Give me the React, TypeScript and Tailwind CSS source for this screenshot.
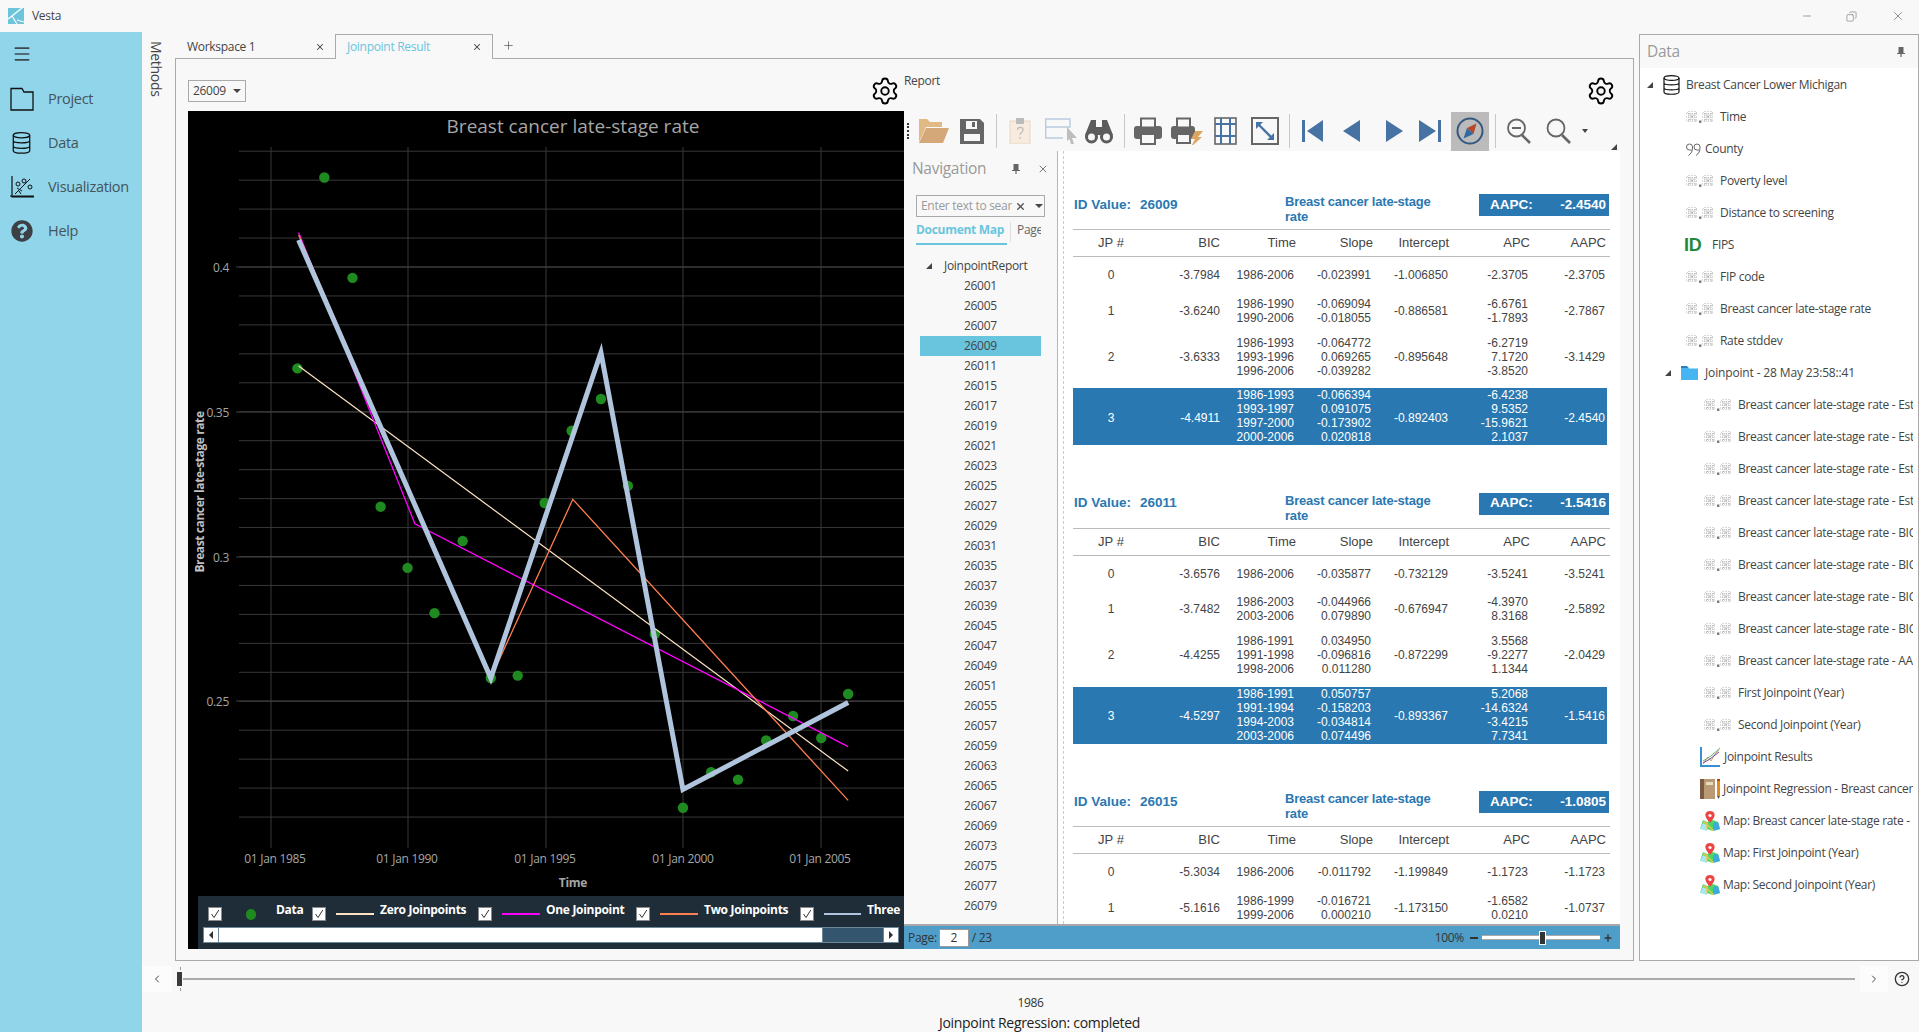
import {ChevronLeft, ChevronRight, CircleHelp, Copy, Menu, Minus, Plus, Settings, X} from "lucide-react";
import {FaQuestionCircle} from "react-icons/fa";

const S = 1.2239;

const dots = [
    [265, 145], [288, 227], [243, 301], [311, 414], [333, 464], [355, 501], [378, 442], [401, 554], [423, 552], [445, 411],
    [467, 352], [491, 326], [513, 397], [535, 518], [558, 660], [581, 631], [603, 637], [626, 605], [648, 585], [671, 603], [693, 567],
];
const lines = [
    {color: "#ffe4c4", w: 1.2, pts: [[244, 299], [693, 630]]},
    {color: "#ff00ff", w: 1.3, pts: [[244, 190], [339, 428], [693, 610]]},
    {color: "#ff7f50", w: 1.3, pts: [[244, 192], [401, 554], [468, 408], [693, 654]]},
    {color: "#b0c4de", w: 5, pts: [[244, 196], [401, 554], [491, 288], [558, 645], [693, 574]]},
];
const yTicks = [
    {y: 267, label: "0.4"},
    {y: 412, label: "0.35"},
    {y: 557, label: "0.3"},
    {y: 701, label: "0.25"},
];
const xTicks = [
    {x: 271, cx: 275, label: "01 Jan 1985"},
    {x: 408, cx: 407, label: "01 Jan 1990"},
    {x: 546, cx: 545, label: "01 Jan 1995"},
    {x: 683, cx: 683, label: "01 Jan 2000"},
    {x: 821, cx: 820, label: "01 Jan 2005"},
];

function Chart() {
    return (
        <svg viewBox="188 111 716 785" className="block w-[716px] h-[785px] bg-black">
            <text x="573" y="133" textAnchor="middle" fill="#a6a6a6" fontSize="19" fontFamily="'Open Sans', sans-serif" letterSpacing="0">
                Breast cancer late-stage rate
            </text>
            {Array.from({length: 24}).map((_, i) => (
                <line key={i} x1="239" x2="904" y1={151.2 + i * 28.95} y2={151.2 + i * 28.95} stroke="#383838"/>
            ))}
            {xTicks.map(t => (
                <line key={t.x} x1={t.x} x2={t.x} y1="147" y2="848" stroke="#383838"/>
            ))}
            {yTicks.map(t => (
                <g key={t.y}>
                    <line x1="236" x2="904" y1={t.y} y2={t.y} stroke="#404040"/>
                    <text x="229" y={t.y + 5} textAnchor="end" fill="#a6a6a6" fontSize="12" fontFamily="'Open Sans', sans-serif" letterSpacing="-0.3">{t.label}</text>
                </g>
            ))}
            {xTicks.map(t => (
                <text key={t.cx} x={t.cx} y="863" textAnchor="middle" fill="#a6a6a6" fontSize="12" fontFamily="'Open Sans', sans-serif" letterSpacing="-0.3">{t.label}</text>
            ))}
            <text x="573" y="887" textAnchor="middle" fill="#a6a6a6" fontSize="12" fontWeight="700" fontFamily="'Open Sans', sans-serif" letterSpacing="-0.3">Time</text>
            <text transform="translate(204 492) rotate(-90)" textAnchor="middle" fill="#c0c0c0" fontSize="12" fontWeight="700" fontFamily="'Open Sans', sans-serif" letterSpacing="-0.4">
                Breast cancer late-stage rate
            </text>
            {dots.map(([x, y]) => (
                <circle key={x} cx={x * S} cy={y * S} r="5.2" fill="#1f8a1f"/>
            ))}
            {lines.map(l => (
                <polyline key={l.color} points={l.pts.map(([x, y]) => `${x * S},${y * S}`).join(" ")} fill="none" stroke={l.color} strokeWidth={l.w}/>
            ))}
        </svg>
    );
}

function Check() {
    return (
        <div className="flex items-center justify-center w-[14px] h-[14px] bg-white border border-[#8a8a8a] shrink-0">
            <svg viewBox="0 0 10 10" className="w-[10px] h-[10px]"><path d="M1.5 5 L4 8.5 L8.8 1" fill="none" stroke="#333" strokeWidth="1"/></svg>
        </div>
    );
}

const legend = [
    {label: "Data", color: "", w: "w-[104px]"},
    {label: "Zero Joinpoints", color: "bg-[#ffe4c4]", w: "w-[166px]"},
    {label: "One Joinpoint", color: "bg-[#ff00ff]", w: "w-[158px]"},
    {label: "Two Joinpoints", color: "bg-[#ff7f50]", w: "w-[164px]"},
    {label: "Three", color: "bg-[#b0c4de]", w: "w-[100px]"},
];

function Legend() {
    return (
        <div className="ml-[10px] h-[53px] bg-[#1f2d38] overflow-hidden">
            <div className="flex pl-[10px] pt-[11px] h-[31px]">
                {legend.map(l => (
                    <div key={l.label} className={`flex items-center h-[14px] shrink-0 ${l.w}`}>
                        <Check/>
                        {l.color ? (
                            <div className={`ml-[10px] w-[38px] h-[2px] ${l.color}`}/>
                        ) : (
                            <div className="ml-[10px] w-[38px] flex justify-center"><div className="w-[10px] h-[11px] rounded-full bg-[#1f8a1f]"/></div>
                        )}
                        <span className="ml-[6px] pb-[8px] text-white text-[12px] font-bold whitespace-nowrap tracking-[-0.3px]">{l.label}</span>
                    </div>
                ))}
            </div>
            <div className="flex ml-[5px] w-[696px] h-[16px] border border-[#6e8796] bg-[#33566e]">
                <div className="flex items-center justify-center w-[15px] bg-white border-r border-[#6e8796]">
                    <div className="w-0 h-0 border-y-[4px] border-y-transparent border-r-[4px] border-r-[#333]"/>
                </div>
                <div className="w-[604px] bg-white border-r border-[#6e8796]"/>
                <div className="flex-1"/>
                <div className="flex items-center justify-center w-[15px] bg-white border-l border-[#6e8796]">
                    <div className="w-0 h-0 border-y-[4px] border-y-transparent border-l-[4px] border-l-[#333]"/>
                </div>
            </div>
        </div>
    );
}

function Sep({className}: {className: string}) {
    return <div className={`w-px h-[34px] bg-[#c8c8c8] shrink-0 ${className}`}/>;
}

function Toolbar() {
    return (
        <div className="flex items-center h-[40px] relative bg-[#f8f8f8] shrink-0">
            <div className="ml-[3px] w-[3px] h-[16px] border-l-2 border-dotted border-[#333] shrink-0"/>
            <svg viewBox="0 0 32 26" className="ml-[8px] w-[32px] h-[26px] shrink-0">
                <path d="M1 24 V1 H9 L12 4 H24 V9 H8 Z" fill="#e0b984"/>
                <path d="M1 25 L8 10 H31 L25 25 Z" fill="#d4a878"/>
            </svg>
            <svg viewBox="0 0 24 25" className="ml-[10px] w-[24px] h-[25px] shrink-0">
                <path d="M0 0 H20 L24 4 V25 H0 Z" fill="#666"/>
                <rect x="6" y="2" width="11" height="8" fill="#f8f8f8"/>
                <rect x="12" y="3" width="3" height="5" fill="#666"/>
                <rect x="4" y="15" width="16" height="7" fill="#f8f8f8"/>
            </svg>
            <Sep className="ml-[12px]"/>
            <svg viewBox="0 0 22 26" className="ml-[12px] w-[22px] h-[26px] shrink-0">
                <rect x="1" y="3" width="20" height="23" fill="#f6ebde" stroke="#e8d6c2"/>
                <rect x="7" y="0" width="8" height="6" fill="#bbb"/>
                <path d="M8.5 12 C8.5 8.5 14 8.5 14 12 C14 14 11 14 11 17 M11 19 V21" fill="none" stroke="#bbb" strokeWidth="1.2"/>
            </svg>
            <svg viewBox="0 0 32 26" className="ml-[14px] w-[32px] h-[26px] shrink-0">
                <path d="M0.7 1 H25 V9 H0.7 Z M0.7 9 H16 M0.7 9 V20 H18" fill="none" stroke="#b9cade" strokeWidth="1.4"/>
                <path d="M22 9 L32 20 H27 L29 26 L26 26 L24.5 21 L22 23 Z" fill="#bdbdbd"/>
            </svg>
            <svg viewBox="0 0 28 25" className="ml-[8px] w-[28px] h-[25px] shrink-0">
                <path d="M6 1 H11 V8 H17 V1 H22 L28 16 H0 Z" fill="#5c5c5c"/>
                <circle cx="6.5" cy="18" r="5" fill="#f8f8f8" stroke="#5c5c5c" strokeWidth="3"/>
                <circle cx="21.5" cy="18" r="5" fill="#f8f8f8" stroke="#5c5c5c" strokeWidth="3"/>
            </svg>
            <Sep className="ml-[11px]"/>
            <svg viewBox="0 0 28 28" className="ml-[9px] w-[28px] h-[28px] shrink-0">
                <rect x="0" y="9" width="28" height="13" rx="3" fill="#666"/>
                <rect x="7" y="1.5" width="14" height="9" fill="#f8f8f8" stroke="#666" strokeWidth="2"/>
                <rect x="7" y="17" width="14" height="10" fill="#f8f8f8" stroke="#666" strokeWidth="2"/>
            </svg>
            <svg viewBox="0 0 32 28" className="ml-[9px] w-[32px] h-[28px] shrink-0">
                <rect x="0" y="9" width="24" height="13" rx="3" fill="#666"/>
                <rect x="6" y="1.5" width="13" height="9" fill="#f8f8f8" stroke="#666" strokeWidth="2"/>
                <rect x="6" y="17" width="13" height="9" fill="#f8f8f8" stroke="#666" strokeWidth="2"/>
                <path d="M24 14 H32 L27 20 H31 L20 30 L24 22 H20 Z" fill="#dba562"/>
            </svg>
            <svg viewBox="0 0 23 28" className="ml-[11px] w-[23px] h-[28px] shrink-0">
                <rect x="1" y="1" width="21" height="26" fill="none" stroke="#666" strokeWidth="1.6"/>
                <path d="M7 1 V27 M16 1 V27 M1 7 H22 M1 19 H22" stroke="#4672a4" strokeWidth="2"/>
            </svg>
            <svg viewBox="0 0 28 28" className="ml-[14px] w-[28px] h-[28px] shrink-0">
                <rect x="1" y="1" width="26" height="26" fill="none" stroke="#666" strokeWidth="2"/>
                <path d="M6 6 L22 22" stroke="#4672a4" strokeWidth="2.4"/>
                <path d="M5 5 H12 L5 12 Z M23 23 H16 L23 16 Z" fill="#4672a4"/>
            </svg>
            <Sep className="ml-[10px]"/>
            <svg viewBox="0 0 21 22" className="ml-[12px] w-[21px] h-[22px] shrink-0"><path d="M0 0 H3 V22 H0 Z M21 0 V22 L5 11 Z" fill="#4672a4"/></svg>
            <svg viewBox="0 0 17 22" className="ml-[20px] w-[17px] h-[22px] shrink-0"><path d="M17 0 V22 L0 11 Z" fill="#4672a4"/></svg>
            <svg viewBox="0 0 17 22" className="ml-[26px] w-[17px] h-[22px] shrink-0"><path d="M0 0 V22 L17 11 Z" fill="#4672a4"/></svg>
            <svg viewBox="0 0 22 22" className="ml-[16px] w-[22px] h-[22px] shrink-0"><path d="M19 0 H22 V22 H19 Z M0 0 V22 L17 11 Z" fill="#4672a4"/></svg>
            <div className="flex items-center justify-center ml-[10px] w-[38px] h-[39px] bg-[#bbbbbb] shrink-0">
                <svg viewBox="0 0 28 28" className="w-[28px] h-[28px]">
                    <circle cx="14" cy="14" r="12.5" fill="none" stroke="#35587f" strokeWidth="2"/>
                    <path d="M20.5 6.5 L17.5 17 L11 11 Z" fill="#b5492a"/>
                    <path d="M7.5 21.5 L11 11 L17.5 17 Z" fill="#2f6aa5"/>
                </svg>
            </div>
            <Sep className="ml-[6px]"/>
            <svg viewBox="0 0 24 26" className="ml-[11px] w-[24px] h-[26px] shrink-0">
                <circle cx="9.5" cy="10" r="8.5" fill="none" stroke="#666" strokeWidth="1.8"/>
                <path d="M15 17 L23 25" stroke="#666" strokeWidth="2.6"/>
                <path d="M5 10 H14" stroke="#666" strokeWidth="2"/>
            </svg>
            <svg viewBox="0 0 25 26" className="ml-[15px] w-[25px] h-[26px] shrink-0">
                <circle cx="10" cy="10" r="8.5" fill="none" stroke="#666" strokeWidth="1.8"/>
                <path d="M16 17 L24 25" stroke="#666" strokeWidth="2.6"/>
            </svg>
            <div className="ml-[11px] w-0 h-0 border-x-[3.5px] border-x-transparent border-t-[4px] border-t-[#444] shrink-0"/>
            <div className="absolute right-[3px] bottom-[1px] w-0 h-0 border-b-[6px] border-b-[#444] border-l-[6px] border-l-transparent"/>
        </div>
    );
}

const navIds = [
    "26001", "26005", "26007", "26009", "26011", "26015", "26017", "26019", "26021", "26023", "26025", "26027", "26029", "26031", "26035", "26037",
    "26039", "26045", "26047", "26049", "26051", "26055", "26057", "26059", "26063", "26065", "26067", "26069", "26073", "26075", "26077", "26079",
];

function Pin({className}: {className: string}) {
    return (
        <svg viewBox="0 0 8 10" className={`w-[8px] h-[10px] shrink-0 ${className}`}>
            <path d="M1.5 0 H6.5 V6 H8 V7 H4.6 V10 H3.4 V7 H0 V6 H1.5 Z" fill="#666"/>
        </svg>
    );
}

function Navigation() {
    return (
        <div className="flex flex-col w-[154px] shrink-0 border-r border-[#b5b5b5] overflow-hidden">
            <div className="flex items-center h-[36px] shrink-0 pl-[8px]">
                <span className="text-[15.5px] text-[#9a9a9a] w-[100px]">Navigation</span>
                <Pin className=""/>
                <X size={12} className="ml-[17px] text-[#777]"/>
            </div>
            <div className="flex items-center ml-[12px] mt-[8px] w-[129px] h-[22px] border border-[#aaa] shrink-0 pl-[4px] overflow-hidden">
                <span className="w-[91px] overflow-hidden whitespace-nowrap text-[12px] text-[#9a9a9a]">Enter text to search</span>
                <X size={11} strokeWidth={3} className="ml-[3px] text-[#555]"/>
                <div className="ml-[9px] w-0 h-0 border-x-[4px] border-x-transparent border-t-[4px] border-t-[#444]"/>
            </div>
            <div className="flex ml-[12px] h-[28px] shrink-0">
                <div className="flex items-center w-[91px] h-[28px] border-b-[2px] border-[#69c5de] text-[12px] font-bold text-[#69c5de] whitespace-nowrap">Document Map</div>
                <div className="ml-[3px] mt-[5px] w-px h-[20px] bg-[#ddd]"/>
                <div className="flex items-center ml-[6px] h-[26px] w-[24px] overflow-hidden text-[12px] text-[#666]">Page</div>
            </div>
            <div className="flex items-center h-[20px] mt-[11px] shrink-0 pl-[22px] text-[12px] text-[#444]">
                <div className="w-0 h-0 border-b-[6px] border-b-[#444] border-l-[6px] border-l-transparent"/>
                <span className="ml-[12px]">JoinpointReport</span>
            </div>
            {navIds.map(id => (
                <div key={id} className={`flex items-center ml-[16px] w-[121px] h-[20px] shrink-0 pl-[44px] text-[12px] text-[#444] ${id === "26009" ? "bg-[#69c5de]" : ""}`}>
                    {id}
                </div>
            ))}
        </div>
    );
}

type Row = {
    jp: string;
    bic: string;
    time: string[];
    slope: string[];
    intercept: string;
    apc: string[];
    aapc: string;
};

const reports: {id: string; aapc: string; selected: number; rows: Row[]}[] = [
    {
        id: "26009", aapc: "-2.4540", selected: 3, rows: [
            {jp: "0", bic: "-3.7984", time: ["1986-2006"], slope: ["-0.023991"], intercept: "-1.006850", apc: ["-2.3705"], aapc: "-2.3705"},
            {jp: "1", bic: "-3.6240", time: ["1986-1990", "1990-2006"], slope: ["-0.069094", "-0.018055"], intercept: "-0.886581", apc: ["-6.6761", "-1.7893"], aapc: "-2.7867"},
            {jp: "2", bic: "-3.6333", time: ["1986-1993", "1993-1996", "1996-2006"], slope: ["-0.064772", "0.069265", "-0.039282"], intercept: "-0.895648", apc: ["-6.2719", "7.1720", "-3.8520"], aapc: "-3.1429"},
            {jp: "3", bic: "-4.4911", time: ["1986-1993", "1993-1997", "1997-2000", "2000-2006"], slope: ["-0.066394", "0.091075", "-0.173902", "0.020818"], intercept: "-0.892403", apc: ["-6.4238", "9.5352", "-15.9621", "2.1037"], aapc: "-2.4540"},
        ],
    },
    {
        id: "26011", aapc: "-1.5416", selected: 3, rows: [
            {jp: "0", bic: "-3.6576", time: ["1986-2006"], slope: ["-0.035877"], intercept: "-0.732129", apc: ["-3.5241"], aapc: "-3.5241"},
            {jp: "1", bic: "-3.7482", time: ["1986-2003", "2003-2006"], slope: ["-0.044966", "0.079890"], intercept: "-0.676947", apc: ["-4.3970", "8.3168"], aapc: "-2.5892"},
            {jp: "2", bic: "-4.4255", time: ["1986-1991", "1991-1998", "1998-2006"], slope: ["0.034950", "-0.096816", "0.011280"], intercept: "-0.872299", apc: ["3.5568", "-9.2277", "1.1344"], aapc: "-2.0429"},
            {jp: "3", bic: "-4.5297", time: ["1986-1991", "1991-1994", "1994-2003", "2003-2006"], slope: ["0.050757", "-0.158203", "-0.034814", "0.074496"], intercept: "-0.893367", apc: ["5.2068", "-14.6324", "-3.4215", "7.7341"], aapc: "-1.5416"},
        ],
    },
    {
        id: "26015", aapc: "-1.0805", selected: -1, rows: [
            {jp: "0", bic: "-5.3034", time: ["1986-2006"], slope: ["-0.011792"], intercept: "-1.199849", apc: ["-1.1723"], aapc: "-1.1723"},
            {jp: "1", bic: "-5.1616", time: ["1986-1999", "1999-2006"], slope: ["-0.016721", "0.000210"], intercept: "-1.173150", apc: ["-1.6582", "0.0210"], aapc: "-1.0737"},
        ],
    },
];

const columns = "grid grid-cols-[76px_71px_76px_77px_76px_81px_76px] items-center";
const rowHeights = ["h-[36px]", "h-[35px]", "h-[57px]", "h-[57px]"];

function Lines({items}: {items: string[]}) {
    return (
        <div className={`flex flex-col text-right pr-[2px] leading-[14px] ${items.length === 4 ? "pb-[3px]" : ""}`}>
            {items.map((t, i) => <span key={i}>{t}</span>)}
        </div>
    );
}

function Report({report}: {report: (typeof reports)[number]}) {
    return (
        <div className="h-[298.5px] shrink-0 font-['Liberation_Sans',Arial,sans-serif] text-[12px] text-[#444] tracking-normal">
            <div className="flex h-[35px]">
                <div className="flex items-center w-[212px] h-[22px] pl-[1px] text-[13.5px] font-bold text-[#2a78b2]">
                    <span>ID Value:</span>
                    <span className="ml-[9px]">{report.id}</span>
                </div>
                <div className="w-[194px] text-[13px] font-bold leading-[15px] text-[#2a78b2] tracking-[-0.2px]">
                    <div className="w-[160px]">Breast cancer late-stage rate</div>
                </div>
                <div className="flex items-center justify-between w-[130px] h-[22px] pl-[11px] pr-[3px] bg-[#2a78b2] text-[13.5px] font-bold text-white">
                    <span>AAPC:</span>
                    <span>{report.aapc}</span>
                </div>
            </div>
            <div className={`${columns} w-[537px] h-[28px] border-y border-[#bbb] text-[13px]`}>
                <span className="text-center">JP #</span>
                <span className="text-right">BIC</span>
                <span className="text-right">Time</span>
                <span className="text-right">Slope</span>
                <span className="text-right">Intercept</span>
                <span className="text-right">APC</span>
                <span className="text-right">AAPC</span>
            </div>
            {report.rows.map((r, i) => (
                <div
                    key={r.jp}
                    className={`${columns} w-[534px] ${rowHeights[i]} ${i === report.selected ? "mt-[3px] bg-[#2a78b2] text-white" : ""}`}
                >
                    <span className="text-center">{r.jp}</span>
                    <span className="text-right">{r.bic}</span>
                    <Lines items={r.time}/>
                    <Lines items={r.slope}/>
                    <span className="text-right pr-[1px]">{r.intercept}</span>
                    <Lines items={r.apc}/>
                    <span className="text-right pr-[1px]">{r.aapc}</span>
                </div>
            ))}
        </div>
    );
}

function StatusBar() {
    return (
        <div className="flex items-center h-[25px] bg-[#4e9ec9] border-t-2 border-[#a8a8a8] shrink-0 text-[12px] text-[#333]">
            <span className="ml-[4px]">Page:</span>
            <div className="flex items-center justify-center ml-[2px] w-[30px] h-[18px] bg-white border border-[#999]">2</div>
            <span className="ml-[3px]">/ 23</span>
            <span className="ml-auto">100%</span>
            <span className="ml-[6px] w-[8px] h-[2px] bg-[#333]"/>
            <div className="relative ml-[4px] w-[118px] h-[5px] bg-white border-y border-[#aaa]">
                <div className="absolute left-[57px] -top-[5px] w-[7px] h-[14px] bg-[#333] border border-white"/>
            </div>
            <Plus size={10} strokeWidth={3.5} className="ml-[3px] mr-[7px]"/>
        </div>
    );
}

function NumIcon() {
    return (
        <svg viewBox="0 0 28 12" className="w-[28px] h-[12px] shrink-0">
            <g stroke="#b4b4b4" strokeWidth="1" strokeDasharray="1 1" fill="none">
                <path d="M3 0 V12 M6 0 V12 M9 0 V12 M0 3 H12 M0 6 H12 M0 9 H12 M1 1 L11 11 M11 1 L1 11"/>
                <path d="M19 0 V12 M22 0 V12 M25 0 V12 M16 3 H28 M16 6 H28 M16 9 H28 M17 1 L27 11 M27 1 L17 11"/>
            </g>
            <rect x="13" y="9.5" width="2.4" height="2.4" fill="#777"/>
        </svg>
    );
}

function QuoteIcon() {
    return (
        <svg viewBox="0 0 15 13" className="w-[15px] h-[13px] shrink-0" fill="none" stroke="#666" strokeWidth="1">
            <path d="M6.5 4 A3 3 0 1 0 3.5 7 H5.6 M6.5 4 C6.7 8 5 11 2.5 12.5"/>
            <path d="M14 4 A3 3 0 1 0 11 7 H13.1 M14 4 C14.2 8 12.5 11 10 12.5"/>
        </svg>
    );
}

function DbIcon() {
    return (
        <svg viewBox="0 0 17 20" className="w-[17px] h-[20px] shrink-0" fill="none" stroke="#111" strokeWidth="1.2">
            <ellipse cx="8.5" cy="3" rx="7.5" ry="2.4"/>
            <path d="M1 3 V17 C1 20 16 20 16 17 V3 M1 8 C1 10.5 16 10.5 16 8 M1 13 C1 15.5 16 15.5 16 13"/>
        </svg>
    );
}

function MapIcon() {
    return (
        <svg viewBox="0 0 20 20" className="w-[20px] h-[20px] shrink-0">
            <path d="M0 18 L3 9 L7 11 L13 9 L18 11 L20 18 L13 20 L7 18 Z" fill="#4cd964"/>
            <path d="M0 18 L3 12 L7 14 L7 20 Z" fill="#a8e6f5"/>
            <path d="M13 12 L18 11 L20 18 L13 20 Z" fill="#3fa9e0"/>
            <path d="M3 10 L14 20 M7 11 L7 19" stroke="#f5c542" strokeWidth="1.2"/>
            <path d="M10 0 C6 0 5 3 5.5 5 C6 7.5 10 12 10 12 C10 12 14 7.5 14.5 5 C15 3 14 0 10 0 Z" fill="#ef4444"/>
            <circle cx="10" cy="4.5" r="1.6" fill="#fff"/>
        </svg>
    );
}

function ChartIcon() {
    return (
        <svg viewBox="0 0 20 20" className="w-[20px] h-[20px] shrink-0" fill="none">
            <path d="M1 0 V19 H20" stroke="#3a8fd0" strokeWidth="2"/>
            <path d="M3 17 L8 10 L11 14 L15 7 L19 3" stroke="#d0b060" strokeWidth="1"/>
            <path d="M3 16 L10 12 L19 5" stroke="#7a3fb0" strokeWidth="1"/>
            <path d="M3 14 L11 9 L20 1" stroke="#2fa84f" strokeWidth="0.8"/>
        </svg>
    );
}

function BookIcon() {
    return (
        <svg viewBox="0 0 20 20" className="w-[20px] h-[20px] shrink-0">
            <rect x="0" y="0" width="4" height="20" fill="#7a5a40"/>
            <rect x="4" y="0" width="11" height="20" fill="#b99a75"/>
            <rect x="6" y="3" width="7" height="3" fill="#e8dcc0"/>
            <rect x="17" y="0" width="3" height="2" fill="#c0392b"/>
            <rect x="17" y="2" width="3" height="15" fill="#e08a1e"/>
            <path d="M17 17 H20 L18.5 20 Z" fill="#555"/>
        </svg>
    );
}

function FolderIcon() {
    return (
        <svg viewBox="0 0 17 14" className="w-[17px] h-[14px] shrink-0">
            <path d="M0 1 H7 L8 2.5 H17 V14 H0 Z" fill="#45b4f0"/>
            <path d="M0 0 H6 L7.5 2 H0 Z" fill="#2a7fc0"/>
        </svg>
    );
}

const Tri = () => <div className="w-0 h-0 border-b-[6px] border-b-[#444] border-l-[6px] border-l-transparent shrink-0"/>;

const numChildren = [
    "Breast cancer late-stage rate - Estimate", "Breast cancer late-stage rate - Estimate 2", "Breast cancer late-stage rate - Estimate 3", "Breast cancer late-stage rate - Estimate 4",
    "Breast cancer late-stage rate - BIC", "Breast cancer late-stage rate - BIC 1", "Breast cancer late-stage rate - BIC 2", "Breast cancer late-stage rate - BIC 3",
    "Breast cancer late-stage rate - AAPC", "First Joinpoint (Year)", "Second Joinpoint (Year)",
];

function DataRow({children}: {children: React.ReactNode}) {
    return <div className="flex items-center h-[32px] shrink-0 whitespace-nowrap overflow-hidden">{children}</div>;
}

function DataPanel() {
    return (
        <div className="flex flex-col w-[280px] shrink-0 mt-[2px] border border-[#aaa] overflow-hidden">
            <div className="flex items-center justify-between h-[33px] shrink-0 pl-[7px] pr-[13px]">
                <span className="text-[15.5px] text-[#9a9a9a]">Data</span>
                <Pin className=""/>
            </div>
            <div className="flex-1 bg-white pr-[5px] pt-[1px] text-[12px] text-[#444]">
                <DataRow>
                    <div className="ml-[7px] mr-[10px]"><Tri/></div>
                    <DbIcon/>
                    <span className="ml-[6px]">Breast Cancer Lower Michigan</span>
                </DataRow>
                {["Time", "County", "Poverty level", "Distance to screening", "FIPS", "FIP code", "Breast cancer late-stage rate", "Rate stddev"].map(label => (
                    <DataRow key={label}>
                        {label === "County" ? (
                            <>
                                <div className="ml-[46px] mr-[4px]"><QuoteIcon/></div>
                                <span>{label}</span>
                            </>
                        ) : label === "FIPS" ? (
                            <>
                                <span className="ml-[44px] w-[28px] text-[18px] font-black text-[#1f8a3a] font-['Liberation_Sans',sans-serif]">ID</span>
                                <span>{label}</span>
                            </>
                        ) : (
                            <>
                                <div className="ml-[46px]"><NumIcon/></div>
                                <span className="ml-[6px]">{label}</span>
                            </>
                        )}
                    </DataRow>
                ))}
                <DataRow>
                    <div className="ml-[25px] mr-[10px]"><Tri/></div>
                    <FolderIcon/>
                    <span className="ml-[7px] tracking-[-0.15px]">Joinpoint - 28 May 23:58::41</span>
                </DataRow>
                {numChildren.map(label => (
                    <DataRow key={label}>
                        <div className="ml-[64px]"><NumIcon/></div>
                        <span className="ml-[6px]">{label}</span>
                    </DataRow>
                ))}
                <DataRow>
                    <div className="ml-[60px]"><ChartIcon/></div>
                    <span className="ml-[4px]">Joinpoint Results</span>
                </DataRow>
                <DataRow>
                    <div className="ml-[60px]"><BookIcon/></div>
                    <span className="ml-[3px]">Joinpoint Regression - Breast cancer late-stage</span>
                </DataRow>
                {["Map: Breast cancer late-stage rate - Estimate", "Map: First Joinpoint (Year)", "Map: Second Joinpoint (Year)"].map(label => (
                    <DataRow key={label}>
                        <div className="ml-[60px]"><MapIcon/></div>
                        <span className="ml-[3px]">{label}</span>
                    </DataRow>
                ))}
            </div>
        </div>
    );
}

const sideItems = [
    {
        label: "Project",
        icon: (
            <svg viewBox="0 0 24 24" className="w-[24px] h-[24px]" fill="none" stroke="#111" strokeWidth="1.3">
                <path d="M1 1.5 H12 L14 5 H23 V23 H1 Z"/>
            </svg>
        ),
    },
    {label: "Data", icon: <div className="scale-110 ml-[3px]"><DbIcon/></div>},
    {
        label: "Visualization",
        icon: (
            <svg viewBox="0 0 24 24" className="w-[24px] h-[24px]" fill="none" stroke="#111" strokeWidth="1">
                <path d="M2 1 V22 H24 M0 21 H24" strokeWidth="1.2"/>
                <circle cx="8" cy="9" r="2"/>
                <circle cx="14" cy="6" r="2"/>
                <circle cx="20" cy="12" r="2"/>
                <path d="M5 19 L20 4 M7 13 L12 16 M9 16 L11 19"/>
            </svg>
        ),
    },
    {label: "Help", icon: <FaQuestionCircle className="w-[22px] h-[22px] ml-[1px] text-[#3c4045]"/>},
];

function Sidebar() {
    return (
        <div className="flex flex-col w-[142px] shrink-0 bg-[#90d5e9] text-[#44545c]">
            <div className="flex items-center h-[34px] pl-[12px] mt-[5px] mb-[6px] text-[#3c4a52]">
                <Menu size={20} strokeWidth={2}/>
            </div>
            {sideItems.map(s => (
                <div key={s.label} className="flex items-center h-[44px] pl-[10px]">
                    <div className="flex items-center w-[38px]">{s.icon}</div>
                    <span className="text-[14.5px]">{s.label}</span>
                </div>
            ))}
        </div>
    );
}

export default function App() {
    return (
        <div className="flex flex-col w-[1919px] h-[1032px] overflow-hidden bg-[#f8f8f8] text-[#444] font-['Open_Sans',sans-serif] text-[12px] tracking-[-0.3px]">
            <div className="flex items-center h-[32px] shrink-0">
                <svg viewBox="0 0 16 16" className="ml-[8px] w-[16px] h-[16px]">
                    <rect width="16" height="16" fill="#6cc5dd"/>
                    <path d="M14 0 L4 8 L9 16 M4 8 L0 11 M9 12 L16 14" fill="none" stroke="#fff" strokeWidth="1.2"/>
                </svg>
                <span className="ml-[8px]">Vesta</span>
                <div className="flex items-center ml-auto text-[#666]">
                    <Minus size={12} strokeWidth={1.2}/>
                    <Copy size={11} strokeWidth={1.2} className="ml-[33px] -scale-x-100"/>
                    <X size={14} strokeWidth={1.2} className="ml-[34px] mr-[14px]"/>
                </div>
            </div>
            <div className="flex flex-1 min-h-0">
                <Sidebar/>
                <div className="flex flex-col flex-1 min-w-0">
                    <div className="flex h-[929px] shrink-0">
                        <div className="w-[33px] shrink-0 pt-[9px] pr-[8px] text-[14px] text-[#444] [writing-mode:vertical-rl]">Methods</div>
                        <div className="flex flex-col w-[1459px] shrink-0 mr-[5px]">
                            <div className="relative z-10 flex h-[25px] mt-[2px] shrink-0">
                                <div className="flex items-center justify-between w-[160px] h-[25px] pl-[12px] pr-[10px]">
                                    <span>Workspace 1</span>
                                    <X size={10} strokeWidth={2.5}/>
                                </div>
                                <div className="flex items-center justify-between w-[158px] h-[25px] pl-[11px] pr-[10px] bg-[#f8f8f8] border-x border-t border-[#aaa] text-[#69c5de]">
                                    <span>Joinpoint Result</span>
                                    <X size={10} strokeWidth={2.5} className="text-[#444]"/>
                                </div>
                                <Plus size={13} strokeWidth={1.2} className="ml-[9px] mt-[5px]"/>
                            </div>
                            <div className="flex flex-col flex-1 min-h-0 -mt-px border border-[#aaa] pl-[12px] pr-[13px] pb-[11px]">
                                <div className="flex items-start h-[52px] shrink-0">
                                    <div className="flex items-center justify-between mt-[21px] w-[58px] h-[22px] px-[4px] border border-[#aaa] text-[12px]">
                                        <span>26009</span>
                                        <div className="w-0 h-0 border-x-[4px] border-x-transparent border-t-[4px] border-t-[#444]"/>
                                    </div>
                                    <Settings size={30} strokeWidth={1.5} className="ml-[624px] mt-[17px] text-black shrink-0"/>
                                    <span className="ml-[4px] mt-[13px] text-[12px]">Report</span>
                                    <Settings size={30} strokeWidth={1.5} className="ml-auto mr-[4px] mt-[17px] text-black shrink-0"/>
                                </div>
                                <div className="flex flex-1 min-h-0">
                                    <div className="flex flex-col w-[716px] shrink-0 bg-black">
                                        <Chart/>
                                        <Legend/>
                                    </div>
                                    <div className="flex flex-col flex-1 min-w-0">
                                        <Toolbar/>
                                        <div className="flex flex-1 min-h-0">
                                            <Navigation/>
                                            <div className="flex-1 min-w-0 bg-white overflow-hidden pl-[5px]">
                                                <div className="h-full border-l border-dashed border-[#ccc] pl-[9px] pt-[43px] overflow-hidden">
                                                    {reports.map(r => <Report key={r.id} report={r}/>)}
                                                </div>
                                            </div>
                                        </div>
                                        <StatusBar/>
                                    </div>
                                </div>
                            </div>
                        </div>
                        <DataPanel/>
                    </div>
                    <div className="flex items-center h-[36px] shrink-0">
                        <div className="flex items-center justify-center w-[30px] h-[26px] bg-[#fcfcfc]"><ChevronLeft size={12}/></div>
                        <div className="relative flex-1 ml-[11px] mr-[5px] h-[2px] bg-[#aaa]">
                            <div className="absolute -left-[3px] -top-[11px] h-[24px] w-px border-l border-dashed border-[#999]"/>
                            <div className="absolute -left-[6px] -top-[6px] w-[5px] h-[14px] bg-[#3a3a3a]"/>
                        </div>
                        <div className="flex items-center justify-center w-[28px] h-[26px] bg-[#fcfcfc]"><ChevronRight size={12}/></div>
                        <CircleHelp size={16} strokeWidth={2} className="ml-[6px] mr-[9px] text-[#333]"/>
                    </div>
                    <div className="flex items-center justify-center h-[12px] text-[12px] text-[#333]">1986</div>
                    <div className="flex items-center justify-center h-[20px] mt-[3px] pl-[18px] text-[14px] text-[#222]">Joinpoint Regression: completed</div>
                </div>
            </div>
        </div>
    );
}
